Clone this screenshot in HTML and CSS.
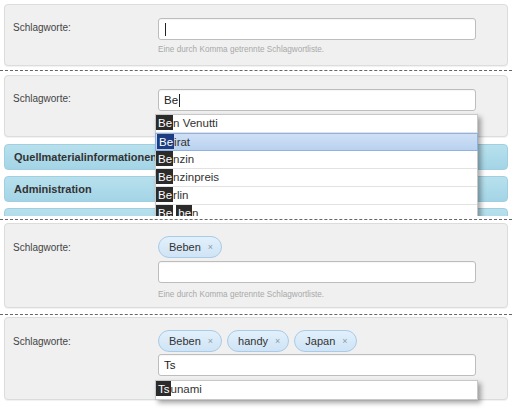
FILE: index.html
```html
<!DOCTYPE html>
<html lang="de">
<head>
<meta charset="utf-8">
<link rel="stylesheet" href="styles.css">
</head>
<body>
<div class="frame f1">
  <div class="clip c1">
    <div class="panel p1">
      <div class="label">Schlagworte:</div>
      <div class="field">
        <div class="input"><span class="caret"></span></div>
        <div class="hint">Eine durch Komma getrennte Schlagwortliste.</div>
      </div>
    </div>
  </div>
</div>
<div class="frame f2">
  <div class="clip c2">
    <div class="panel p2">
      <div class="label">Schlagworte:</div>
      <div class="field">
        <div class="inwrap">
          <div class="input"><span class="typed">Be</span><span class="caret"></span></div>
          <ul class="menu">
            <li><span class="m">Be</span>n Venutti</li>
            <li class="active"><span class="m">Be</span>irat</li>
            <li><span class="m">Be</span>nzin</li>
            <li><span class="m">Be</span>nzinpreis</li>
            <li><span class="m">Be</span>rlin</li>
            <li><span class="m">Be</span> <span class="m">be</span>n</li>
          </ul>
        </div>
        <div class="hint">Eine durch Komma getrennte Schlagwortliste.</div>
      </div>
    </div>
    <div class="acc">Quellmaterialinformationen</div>
    <div class="acc">Administration</div>
    <div class="acc">&nbsp;</div>
  </div>
</div>
<div class="frame f3">
  <div class="clip c3">
    <div class="panel p3">
      <div class="label">Schlagworte:</div>
      <div class="field">
        <div class="tags">
          <span class="tag">Beben<span class="x">×</span></span>
        </div>
        <div class="input"></div>
        <div class="hint">Eine durch Komma getrennte Schlagwortliste.</div>
      </div>
    </div>
  </div>
</div>
<div class="frame f4">
  <div class="clip c4">
    <div class="panel p4">
      <div class="label">Schlagworte:</div>
      <div class="field">
        <div class="tags">
          <span class="tag">Beben<span class="x">×</span></span>
          <span class="tag">handy<span class="x">×</span></span>
          <span class="tag">Japan<span class="x">×</span></span>
        </div>
        <div class="inwrap">
          <div class="input"><span class="typed">Ts</span></div>
          <ul class="menu single">
            <li><span class="m">Ts</span>unami</li>
          </ul>
        </div>
        <div class="hint">Eine durch Komma getrennte Schlagwortliste.</div>
      </div>
    </div>
  </div>
</div>
</body>
</html>
```
FILE: styles.css
```css
* { box-sizing: border-box; }
html, body { margin: 0; padding: 0; background: #fff; }
body {
  width: 512px;
  height: 410px;
  overflow: hidden;
  font-family: "Liberation Sans", Arial, sans-serif;
  color: #333;
}
.frame { border-bottom: 1px dashed #666; }
.f4 { border-bottom: none; }
.clip { overflow: hidden; }
.c1 { height: 70px; padding-top: 4px; }
.f2 { padding-bottom: 3px; }
.c2 { height: 145px; padding-top: 4px; }
.c3 { height: 94px; padding-top: 3px; }
.c4 { height: 94px; padding-top: 2px; }

.panel {
  margin: 0 4px;
  background: #f0f0f0;
  border: 1px solid #dcdcdc;
  border-radius: 4px;
  box-shadow: 0 1px 1px rgba(0,0,0,0.06);
  display: flex;
  padding: 13px 31px 0 8px;
  position: relative;
}
.p1, .p2 { height: 62px; }
.p3 { height: 85px; padding-top: 12px; }
.p4 { height: 83px; padding-top: 12px; }

.label {
  width: 145px;
  flex: none;
  font-size: 10px;
  line-height: 12px;
  padding-top: 4px;
  color: #444;
}
.p3 .label, .p4 .label { padding-top: 6px; }

.field { flex: 1; position: relative; }
.inwrap { position: relative; }
.input {
  height: 22px;
  background: #fff;
  border: 1px solid #bdbdbd;
  border-radius: 3px;
  display: flex;
  align-items: center;
  padding-left: 5px;
  font-size: 11.5px;
  color: #222;
  box-shadow: inset 0 1px 1px rgba(0,0,0,0.04);
}
.caret {
  display: inline-block;
  width: 1px;
  height: 13px;
  background: #222;
  margin-left: 1px;
}
.hint {
  font-size: 8.2px;
  line-height: 10px;
  color: #a9a9a9;
  margin-top: 5px;
}
.p3 .hint { margin-top: 7px; }

.tags { display: flex; gap: 5px; margin-bottom: 3px; }
.p4 .tags { margin-bottom: 2px; }
.tag {
  height: 22px;
  border: 1px solid #a9cbe6;
  border-radius: 11px;
  background: linear-gradient(#e2f0fb, #cfe4f6);
  display: inline-flex;
  align-items: center;
  padding: 0 8px 0 10px;
  font-size: 11px;
  color: #333;
}
.tag .x {
  font-size: 9px;
  color: #8a9aa8;
  margin-left: 7px;
}

.menu {
  position: absolute;
  left: -3px;
  width: 323px;
  top: 25px;
  margin: 0;
  padding: 0;
  list-style: none;
  background: #fff;
  border: 1px solid #c8c8c8;
  box-shadow: 3px 3px 5px rgba(0,0,0,0.35);
  z-index: 5;
}
.menu.single { top: 26px; }
.menu li {
  height: 18px;
  font-size: 11.5px;
  line-height: 17px;
  color: #333;
  border-bottom: 1px solid #e2e2e2;
  padding-left: 0;
  white-space: nowrap;
}
.menu.single li { border-bottom: none; }
.menu li.active {
  background: linear-gradient(#cfe0f5, #b9d2f0);
  border: 1px solid #8fb2e2;
  margin: 0 -1px;
  padding-left: 1px;
  line-height: 16px;
}
.m {
  background: #2b2b2b;
  color: #fff;
  padding: 2px 1px 1px 2px;
}
.active .m { background: #1d3c82; }

.acc {
  margin: 7px 4px 0;
  height: 26px;
  border: 1px solid #9fcfe0;
  border-radius: 4px;
  background: linear-gradient(#b8e0ed, #a3d4e6);
  font-size: 11px;
  font-weight: bold;
  color: #333;
  line-height: 24px;
  padding-left: 9px;
}
.acc + .acc { margin-top: 6px; }
```
